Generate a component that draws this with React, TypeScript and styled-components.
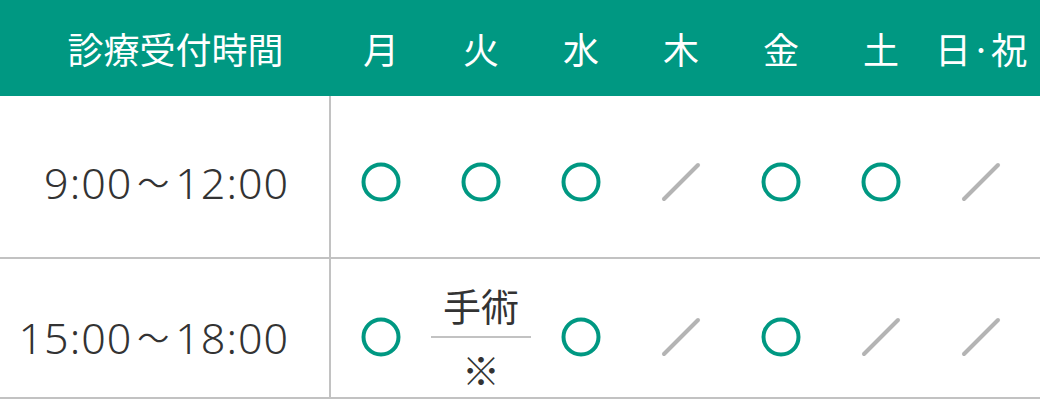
import React from "react";
import styled, { createGlobalStyle } from "styled-components";

const GREEN = "#009882";
const LINE = "#c2c2c2";
const TEXT = "#333333";
const COLUMNS = "331px repeat(7, 100px)";

const GlobalStyle = createGlobalStyle`
  body {
    margin: 0;
    background: #fff;
    font-family: "Noto Sans CJK JP", "Noto Sans", sans-serif;
  }
`;

const Table = styled.div`
  width: 1040px;
  overflow: hidden;
`;

const HeaderRow = styled.div`
  display: grid;
  grid-template-columns: ${COLUMNS};
  align-items: center;
  height: 96px;
  background: ${GREEN};
  color: #fff;
  font-size: 36px;
  line-height: 1;
`;

const HeaderLabel = styled.div`
  padding-left: 20px;
  text-align: center;
`;

const DayHead = styled.div`
  text-align: center;
`;

interface RowProps {
  $height: number;
  $shift: number;
}

const Row = styled.div<RowProps>`
  display: grid;
  grid-template-columns: ${COLUMNS};
  height: ${(p) => p.$height}px;
  border-bottom: 2px solid ${LINE};

  & > * {
    padding-top: ${(p) => p.$shift}px;
  }
`;

const TimeCell = styled.div`
  display: flex;
  align-items: center;
  justify-content: flex-end;
  padding-right: 40px;
  border-right: 2px solid ${LINE};
  color: ${TEXT};
  font-family: "Noto Sans", "Noto Sans CJK JP", sans-serif;
  font-size: 43px;
  font-weight: 350;
  letter-spacing: 1px;
  line-height: 1;
`;

const Tilde = styled.span`
  font-family: "Noto Sans CJK JP", sans-serif;
  font-size: 32px;
  margin: 0 5px;
  position: relative;
  top: -1px;
`;

const MarkCell = styled.div`
  display: flex;
  align-items: center;
  justify-content: center;
`;

const Split = styled.div`
  display: flex;
  flex-direction: column;
  width: 100%;
  text-align: center;
  color: ${TEXT};
  font-size: 38px;
`;

const SplitTop = styled.div`
  line-height: 40px;
  padding-bottom: 11px;
  border-bottom: 2px solid ${LINE};
`;

const SplitBottom = styled.div`
  line-height: 40px;
  padding-top: 11px;
`;

type Mark = "open" | "closed" | "surgery";

const days = ["月", "火", "水", "木", "金", "土", "日·祝"];

const rows: { from: string; to: string; height: number; shift: number; marks: Mark[] }[] = [
  {
    from: "9:00",
    to: "12:00",
    height: 161,
    shift: 11,
    marks: ["open", "open", "open", "closed", "open", "open", "closed"],
  },
  {
    from: "15:00",
    to: "18:00",
    height: 138,
    shift: 18,
    marks: ["open", "surgery", "open", "closed", "open", "closed", "closed"],
  },
];

const OpenIcon = () => (
  <svg width="40" height="40" viewBox="0 0 40 40">
    <circle cx="20" cy="20" r="17.5" fill="none" stroke={GREEN} strokeWidth="4" />
  </svg>
);

const ClosedIcon = () => (
  <svg width="40" height="40" viewBox="0 0 40 40">
    <line x1="3" y1="37" x2="37" y2="3" stroke="#b4b4b4" strokeWidth="4" strokeLinecap="round" />
  </svg>
);

const renderMark = (mark: Mark) => {
  if (mark === "open") return <OpenIcon />;
  if (mark === "closed") return <ClosedIcon />;
  return (
    <Split>
      <SplitTop>手術</SplitTop>
      <SplitBottom>※</SplitBottom>
    </Split>
  );
};

const App = () => {
  return (
    <>
      <GlobalStyle />
      <Table>
        <HeaderRow>
          <HeaderLabel>診療受付時間</HeaderLabel>
          {days.map((d) => (
            <DayHead key={d}>{d}</DayHead>
          ))}
        </HeaderRow>

        {rows.map((r) => (
          <Row key={r.from} $height={r.height} $shift={r.shift}>
            <TimeCell>
              {r.from}
              <Tilde>～</Tilde>
              {r.to}
            </TimeCell>
            {r.marks.map((m, i) => (
              <MarkCell key={`${r.from}-${i}`}>{renderMark(m)}</MarkCell>
            ))}
          </Row>
        ))}
      </Table>
    </>
  );
};

export default App;
